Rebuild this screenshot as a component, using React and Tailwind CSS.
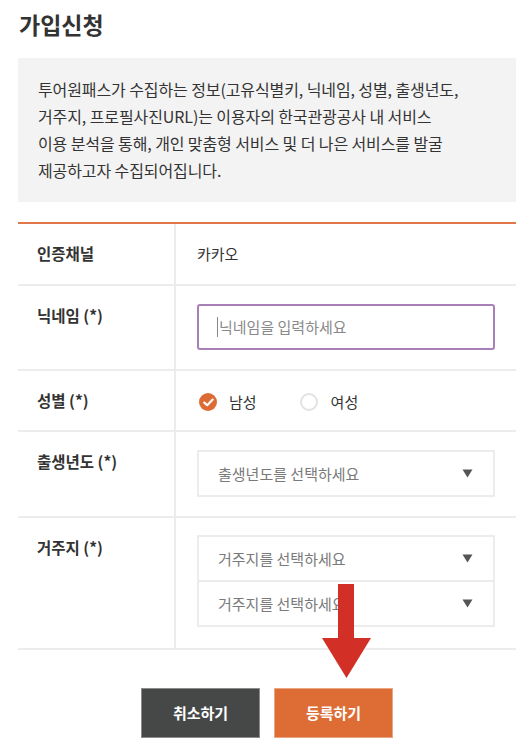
import React from "react";

const font = { fontFamily: '"Noto Sans CJK KR", "Noto Sans", sans-serif' };

function Tri() {
  return (
    <svg width="11" height="9" viewBox="0 0 11 9" className="shrink-0">
      <polygon points="0.5,0.5 10.5,0.5 5.5,8.5" fill="#555555" />
    </svg>
  );
}

function Select({ text, className = "" }) {
  return (
    <div className={"flex h-[47px] items-center justify-between border-2 border-[#ececec] bg-white pl-[19px] pr-[20px] " + className}>
      <span className="text-[15px] leading-[22px] text-[#7a7a7a] whitespace-nowrap">{text}</span>
      <Tri />
    </div>
  );
}

function Label({ children }) {
  return (
    <div className="w-[158px] shrink-0 border-r-2 border-[#ececec] pl-[19px] pt-[18px] text-[15.5px] font-bold leading-[22px] text-[#333333] whitespace-nowrap">
      {children}
    </div>
  );
}

export default function App() {
  return (
    <div style={font} className="relative min-h-[753px] w-[529px] bg-white text-[#333333]">
      <div className="ml-[18px] w-[498px] pt-[8px]">
        <h1 className="ml-[1px] text-[23px] font-bold leading-[33px] text-[#333333]">가입신청</h1>
        <div className="mt-[17px] bg-[#f3f3f3] pl-[20px] pt-[18px] pb-[18px] text-[16px] leading-[27px] tracking-[-0.1px] text-[#333333] whitespace-nowrap">
          투어원패스가 수집하는 정보(고유식별키, 닉네임, 성별, 출생년도,
          <br />
          거주지, 프로필사진URL)는 이용자의 한국관광공사 내 서비스
          <br />
          이용 분석을 통해, 개인 맞춤형 서비스 및 더 나은 서비스를 발굴
          <br />
          제공하고자 수집되어집니다.
        </div>

        <div className="mt-[20px] border-t-2 border-[#e0764a]">
          {/* 인증채널 */}
          <div className="flex h-[62px] border-b-2 border-[#ececec]">
            <Label>인증채널</Label>
            <div className="pl-[21px] pt-[19px] text-[15px] leading-[22px] text-[#333333]">카카오</div>
          </div>

          {/* 닉네임 */}
          <div className="flex h-[85px] border-b-2 border-[#ececec]">
            <Label>닉네임 (*)</Label>
            <div className="flex-1 pl-[21px] pr-[21px] pt-[18px]">
              <div className="relative flex h-[46px] items-center rounded-[3px] border-2 border-[#a97fb8] bg-white pl-[18px]">
                <span className="mr-[1px] h-[20px] w-[1px] bg-[#888888]" />
                <input
                  className="w-full bg-transparent text-[15px] leading-[22px] text-[#333333] outline-none placeholder:text-[#8a8a8a]"
                  style={font}
                  placeholder="닉네임을 입력하세요"
                />
              </div>
            </div>
          </div>

          {/* 성별 */}
          <div className="flex h-[61px] border-b-2 border-[#ececec]">
            <Label>성별 (*)</Label>
            <div className="flex items-center pl-[23px] pt-[3px]">
              <span className="flex h-[18px] w-[18px] items-center justify-center rounded-full bg-[#dd6b35]">
                <svg width="11" height="9" viewBox="0 0 11 9">
                  <path d="M1.3 4.6 L4.2 7.2 L9.7 1.6" fill="none" stroke="#ffffff" strokeWidth="2.2" strokeLinecap="round" strokeLinejoin="round" />
                </svg>
              </span>
              <span className="ml-[12px] text-[15px] leading-[22px] text-[#333333]">남성</span>
              <span className="ml-[43px] h-[18px] w-[18px] rounded-full border-2 border-[#e2e2e2] bg-white" />
              <span className="ml-[13px] text-[15px] leading-[22px] text-[#333333]">여성</span>
            </div>
          </div>

          {/* 출생년도 */}
          <div className="flex h-[86px] border-b-2 border-[#ececec]">
            <Label>출생년도 (*)</Label>
            <div className="flex-1 pl-[21px] pr-[21px] pt-[18px]">
              <Select text="출생년도를 선택하세요" />
            </div>
          </div>

          {/* 거주지 */}
          <div className="flex h-[132px] border-b-2 border-[#ececec]">
            <Label>거주지 (*)</Label>
            <div className="flex-1 pl-[21px] pr-[21px] pt-[17px]">
              <Select text="거주지를 선택하세요" />
              <Select text="거주지를 선택하세요" className="-mt-[2px]" />
            </div>
          </div>
        </div>

        <div className="mt-[38px] flex justify-center gap-[14px]">
          <button className="flex h-[50px] w-[119px] items-center justify-center border border-[#8c8c8c] bg-[#464747] text-[15px] font-bold text-white" style={font}>
            취소하기
          </button>
          <button className="flex h-[50px] w-[119px] items-center justify-center border border-[#eaa582] bg-[#dd6c35] text-[15px] font-bold text-white" style={font}>
            등록하기
          </button>
        </div>
      </div>

      {/* red annotation arrow */}
      <svg className="pointer-events-none absolute left-[320px] top-[582px]" width="54" height="98" viewBox="0 0 54 98">
        <rect x="18" y="2" width="16" height="56" fill="#d22f27" />
        <polygon points="2,56 51,56 26.5,96" fill="#d22f27" />
      </svg>
    </div>
  );
}
